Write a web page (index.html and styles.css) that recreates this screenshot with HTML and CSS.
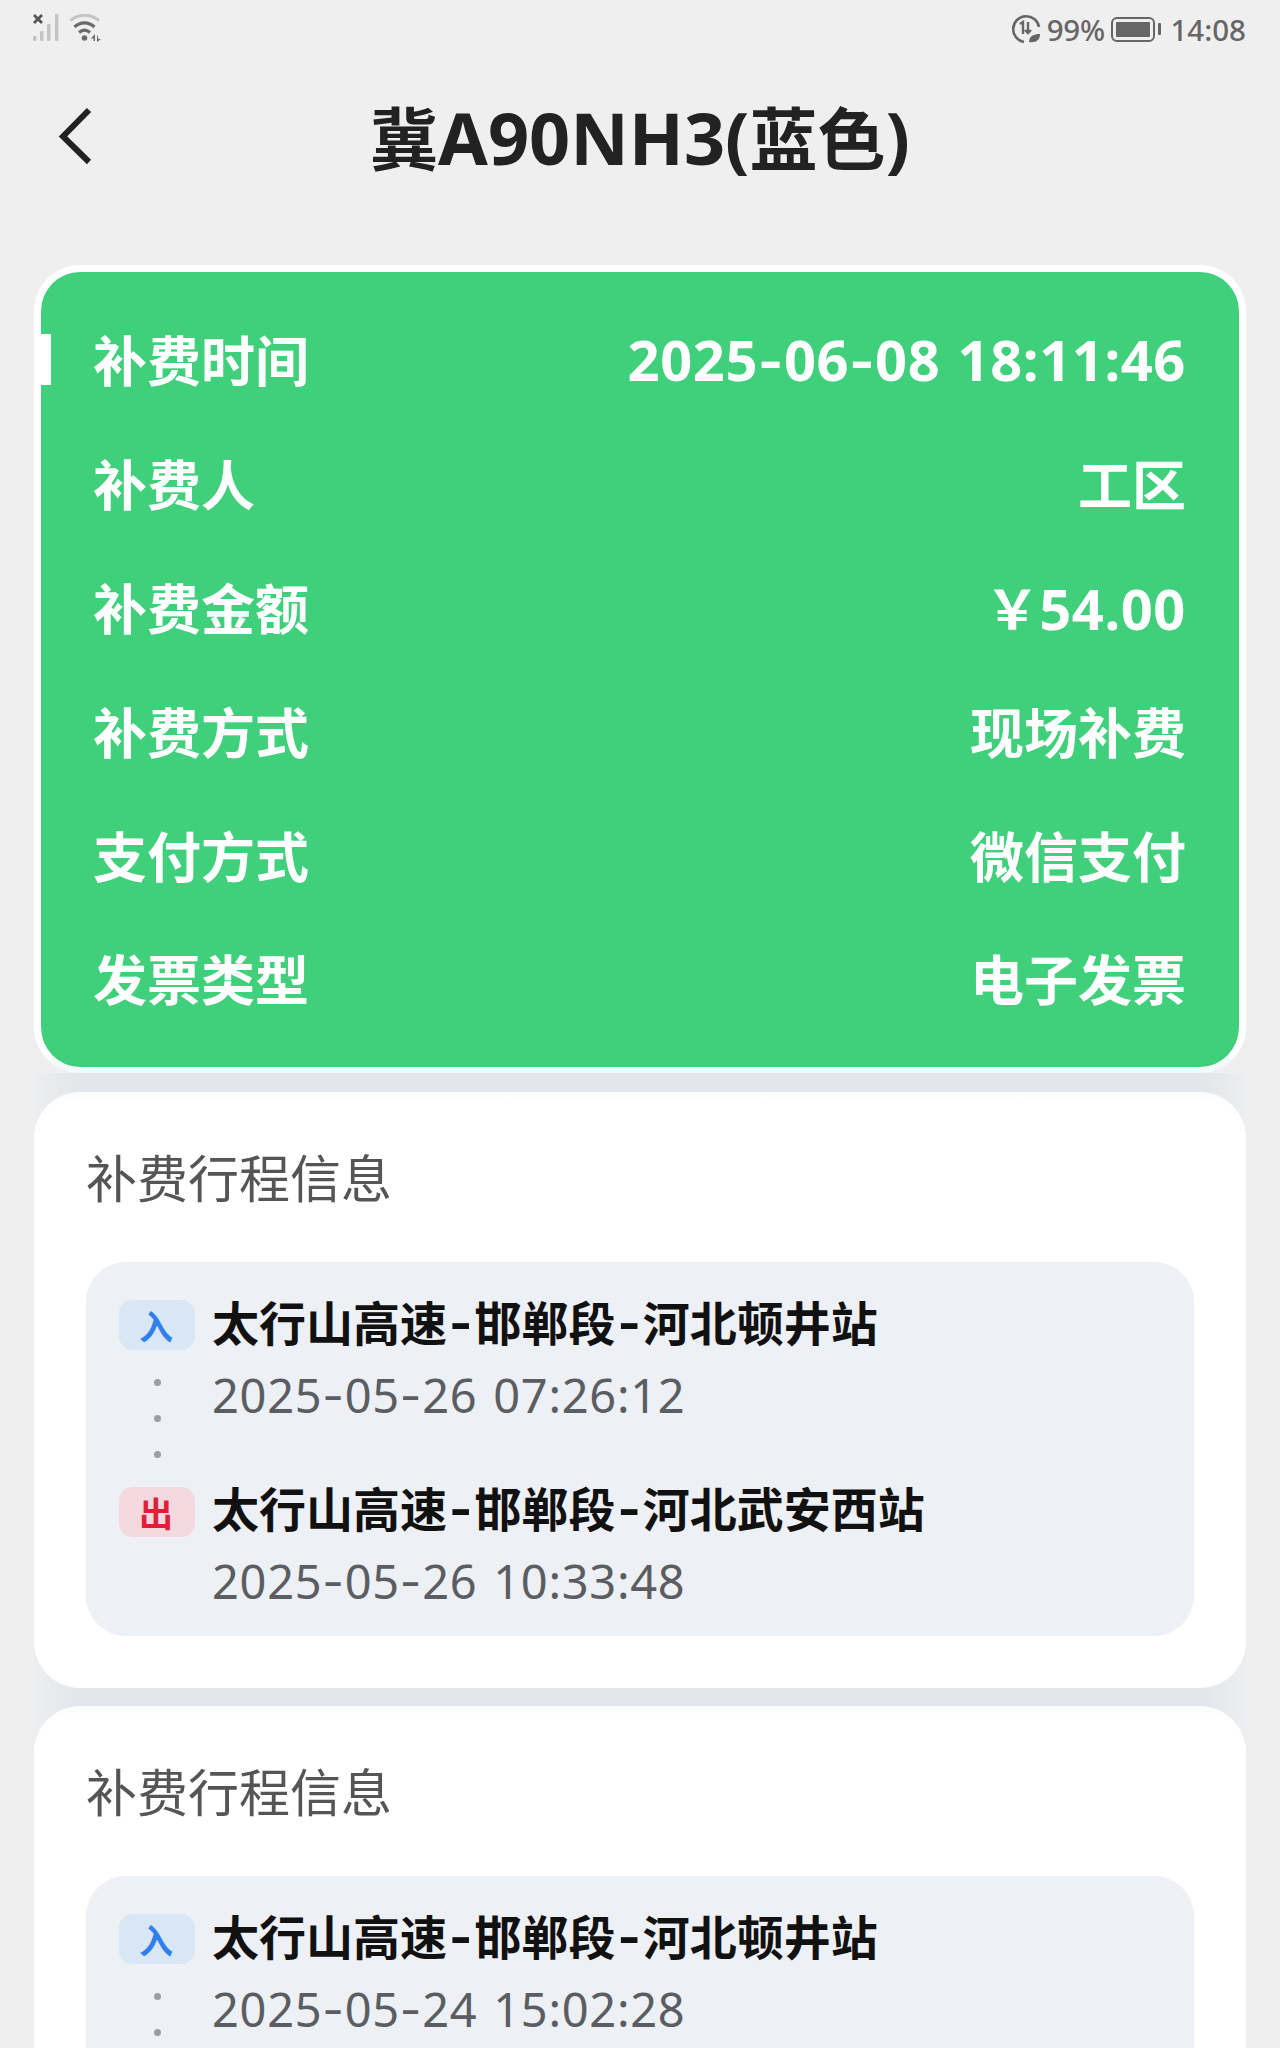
FILE: index.html
```html
<!DOCTYPE html>
<html lang="zh-CN">
<head>
<meta charset="utf-8">
<title>补费详情</title>
<link rel="stylesheet" href="styles.css">
</head>
<body>
<div class="page">
  <div class="status">
    <div class="status-left">
      <svg class="ic-signal" width="30" height="30" viewBox="0 0 30 30">
        <path d="M1 1l8 8M9 1L1 9" stroke="#555" stroke-width="2.800" fill="none"/>
        <g fill="#c4c4c4"><rect x="0" y="22" width="3.500" height="5" rx="1"/><rect x="7" y="17" width="3.500" height="10" rx="1"/><rect x="14" y="10" width="3.500" height="17" rx="1"/><rect x="22" y="0" width="3.500" height="27" rx="1"/></g>
      </svg>
      <svg class="ic-wifi" width="34" height="30" viewBox="0 0 34 30">
        <g fill="none" stroke-width="3.200">
          <path d="M1.500 6.500C10 -0.500 21 -0.500 30 6.500" stroke="#c4c4c4"/>
          <path d="M5.500 13C11.500 7.500 19.500 7.500 25.500 13" stroke="#6a6a6a"/>
          <path d="M10 18.500C13.500 15.500 17.500 15.500 21 18.500" stroke="#6a6a6a"/>
        </g>
        <circle cx="15.500" cy="24" r="2.800" fill="#6a6a6a"/>
        <path d="M26 20v7h-1.500v-3l-3 1zM28 20v8l4-3h-2.500z" fill="#6a6a6a"/>
      </svg>
    </div>
    <div class="status-right">
      <svg class="ic-eco" width="30" height="30" viewBox="0 0 30 30">
        <path d="M13 28A13 13 0 1 1 28 13" fill="none" stroke="#666" stroke-width="2.600"/>
        <path d="M9 10l3-2v12M17 8v11m-3-3l3 3 3-3" fill="none" stroke="#666" stroke-width="2.400"/>
        <path d="M18 28c0-6 5-8 11-8 0 6-4 9-11 8z" fill="#666"/>
      </svg>
      <span class="pct">99%</span>
      <div class="battery"><div class="battery-fill"></div></div>
      <div class="battery-cap"></div>
      <span class="clock">14:08</span>
    </div>
  </div>

  <header class="nav">
    <svg class="back" width="36" height="58" viewBox="0 0 36 58">
      <path d="M32 3L6 29.500 32 55" fill="none" stroke="#222" stroke-width="6"/>
    </svg>
    <h1 class="title">冀<span class="plate">A90NH3(</span>蓝色<span class="plate">)</span></h1>
  </header>

  <section class="summary">
    <div class="marker"></div>
    <div class="row"><span>补费时间</span><span class="num">2025<span class="hy">-</span>06<span class="hy">-</span>08 18:11:46</span></div>
    <div class="row"><span>补费人</span><span>工区</span></div>
    <div class="row"><span>补费金额</span><span>￥<span class="num">54.00</span></span></div>
    <div class="row"><span>补费方式</span><span>现场补费</span></div>
    <div class="row"><span>支付方式</span><span>微信支付</span></div>
    <div class="row"><span>发票类型</span><span>电子发票</span></div>
  </section>

  <div class="trips">
    <section class="card">
      <h2 class="card-title">补费行程信息</h2>
      <div class="panel">
        <div class="stop">
          <div class="rail"><span class="tag tag-in">入</span><span class="dots"><i></i><i></i><i></i></span></div>
          <div class="info"><div class="name">太行山高速<span class="hy">-</span>邯郸段<span class="hy">-</span>河北顿井站</div><div class="time">2025<span class="hy">-</span>05<span class="hy">-</span>26 07:26:12</div></div>
        </div>
        <div class="stop">
          <div class="rail"><span class="tag tag-out">出</span></div>
          <div class="info"><div class="name">太行山高速<span class="hy">-</span>邯郸段<span class="hy">-</span>河北武安西站</div><div class="time">2025<span class="hy">-</span>05<span class="hy">-</span>26 10:33:48</div></div>
        </div>
      </div>
    </section>
    <section class="card">
      <h2 class="card-title">补费行程信息</h2>
      <div class="panel">
        <div class="stop">
          <div class="rail"><span class="tag tag-in">入</span><span class="dots"><i></i><i></i><i></i></span></div>
          <div class="info"><div class="name">太行山高速<span class="hy">-</span>邯郸段<span class="hy">-</span>河北顿井站</div><div class="time">2025<span class="hy">-</span>05<span class="hy">-</span>24 15:02:28</div></div>
        </div>
      </div>
    </section>
  </div>
</div>
</body>
</html>
```
FILE: styles.css
```css
* { box-sizing: border-box; }
html, body { margin: 0; padding: 0; }
body {
  width: 1280px;
  height: 2048px;
  overflow: hidden;
  background: #efefef;
  font-family: "Noto Sans", "Noto Sans CJK SC", sans-serif;
}
.page { width: 1280px; height: 2048px; overflow: hidden; }
.hy { font-family: Inter, sans-serif; }

.status {
  height: 58px;
  padding: 14px 34px 0 33px;
  display: flex;
  justify-content: space-between;
  align-items: flex-start;
  color: #666;
}
.status-left { display: flex; gap: 6px; }
.status-right { display: flex; align-items: center; height: 30px; font-size: 29.500px; font-weight: 500; }
.ic-eco { margin-right: 6px; }
.pct { margin-right: 6px; letter-spacing: -.2px; }
.battery { width: 44px; height: 25px; border: 2.500px solid #666; border-radius: 6px; padding: 3px; }
.battery-fill { width: 100%; height: 100%; background: #666; border-radius: 1px; }
.battery-cap { width: 3px; height: 12px; margin: 0 9.500px 0 3px; background: #666; border-radius: 1px; }

.nav { position: relative; height: 106px; display: flex; align-items: center; justify-content: center; margin-bottom: 101px; }
.back { position: absolute; left: 57px; top: 49px; }
.title { margin: 0; font-size: 68px; font-weight: 700; color: #222; line-height: 106px; transform: translateY(27px); }
.plate { font-size: 72px; }

.summary {
  position: relative;
  margin: 0 34px;
  height: 808px;
  padding: 25px 0 0;
  background: #40d07b;
  border: 7px solid #fff;
  border-bottom-width: 6px;
  border-bottom-color: #f3fafb;
  border-radius: 46px;
  color: #fff;
}
.marker { position: absolute; left: 0; top: 62px; width: 10px; height: 51px; background: #fff; }
.row {
  height: 123.800px;
  padding: 0 53px 0 52px;
  display: flex;
  justify-content: space-between;
  align-items: center;
  font-size: 54px;
  font-weight: 700;
}
.num { font-size: 56px; letter-spacing: .6px; word-spacing: 2px; }
.num .hy { font-size: 54px; }

.trips {
  margin: 0 34px;
  background: linear-gradient(90deg, #eceef1 0, #e3e6ea 40px, #e3e6ea calc(100% - 40px), #eceef1 100%);
  padding-top: 19px;
  display: flex;
  flex-direction: column;
  gap: 18px;
}
.card { background: linear-gradient(180deg, #fbfcfd 0, #fff 14px); border-radius: 46px; padding: 0 52px 52px; }
.card-title { margin: 0; height: 170px; padding-top: 50px; font-size: 51px; font-weight: 400; color: #555; line-height: 72px; }
.panel { background: #edf0f4; border-radius: 40px; padding: 24px 34px 0 33px; height: 374px; }
.stop { display: flex; height: 186px; }
.rail { width: 76px; margin-right: 17px; display: flex; flex-direction: column; align-items: center; }
.tag { width: 76px; height: 50px; margin-top: 14px; padding-right: 2px; border-radius: 14px; display: flex; align-items: center; justify-content: center; font-size: 34px; font-weight: 700; }
.tag-in { background: #d9e6f4; color: #2f80ed; }
.tag-out { margin-top: 15px; background: #f3d9df; color: #e01e37; }
.dots { display: flex; flex-direction: column; align-items: center; gap: 29px; margin-top: 29px; }
.dots i { display: block; width: 7px; height: 7px; border-radius: 50%; background: #9a9da1; }
.name { font-size: 47px; font-weight: 700; color: #111; line-height: 74px; white-space: nowrap; }
.name .hy { margin: 0 2px; font-size: 50px; }
.time { margin-top: -2px; font-size: 47px; font-weight: 400; color: #5a5d61; line-height: 74px; white-space: nowrap; letter-spacing: .7px; word-spacing: 3px; }
```
